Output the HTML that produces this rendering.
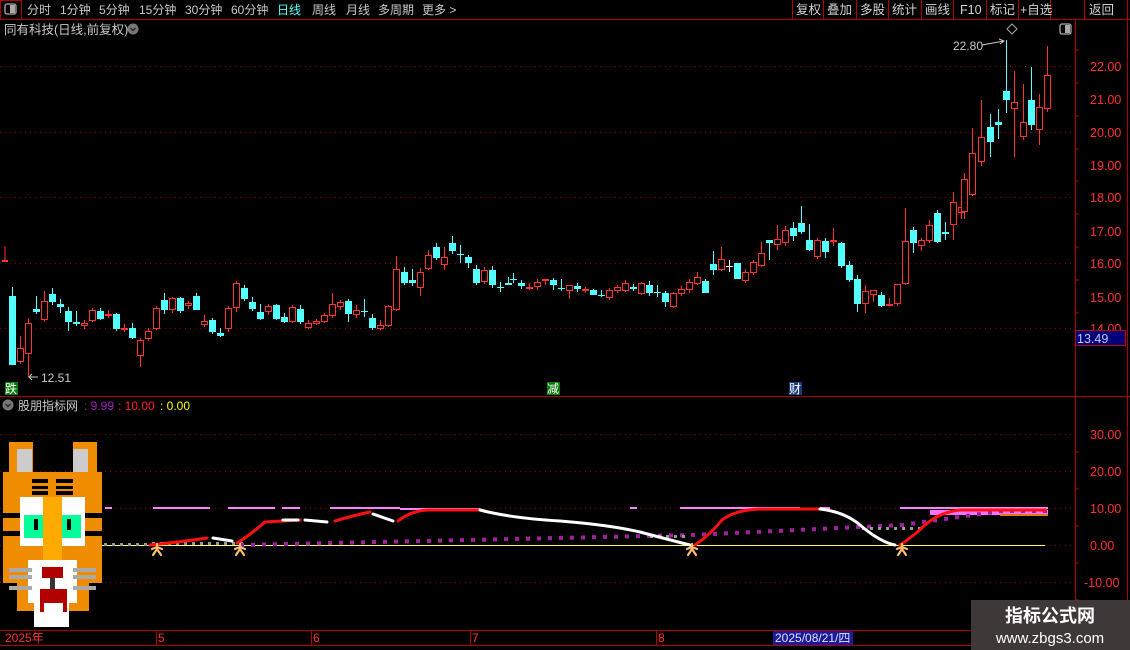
<!DOCTYPE html>
<html><head><meta charset="utf-8"><style>
body{margin:0;background:#000;width:1130px;height:650px;overflow:hidden;font-family:"Liberation Sans","Noto Sans CJK SC",sans-serif;}
#w{position:relative;width:1130px;height:650px;}
svg{position:absolute;left:0;top:0;}
</style></head><body><div id="w">
<svg id="s" width="1130" height="650" xmlns="http://www.w3.org/2000/svg" font-family="Liberation Sans, Noto Sans CJK SC, sans-serif">
<line x1="0" y1="19.5" x2="1130" y2="19.5" stroke="#b00000"/>
<rect x="0.5" y="0.5" width="21" height="19" fill="none" stroke="#b00000"/>
<rect x="5" y="4" width="11" height="10" rx="2" fill="none" stroke="#aaa" stroke-width="1.3"/><rect x="10" y="5" width="5" height="8" fill="#aaa"/>
<g font-size="12" fill="#c8c8c8">
<text x="27" y="14">分时</text><text x="60" y="14">1分钟</text><text x="99" y="14">5分钟</text><text x="139" y="14">15分钟</text><text x="185" y="14">30分钟</text><text x="231" y="14">60分钟</text>
<text x="277" y="14" fill="#54ffff">日线</text><text x="312" y="14">周线</text><text x="346" y="14">月线</text><text x="378" y="14">多周期</text><text x="422" y="14">更多 &gt;</text>
</g>
<g stroke="#b00000" fill="none"><path d="M792.5 0V19M823.5 0V19M856.5 0V19M888.5 0V19M921.5 0V19M953.5 0V19M986.5 0V19M1018.5 0V19M1050.5 0V19M1084.5 0V19M1127.5 0V650"/></g>
<g font-size="12.5" fill="#d0d0d0"><text x="796" y="14">复权</text><text x="827" y="14">叠加</text><text x="860" y="14">多股</text><text x="892" y="14">统计</text><text x="925" y="14">画线</text><text x="960" y="14">F10</text><text x="990" y="14">标记</text><text x="1020" y="14">+自选</text><text x="1089" y="14">返回</text></g>
<text x="4" y="34" font-size="12.5" fill="#c8c8c8">同有科技(日线,前复权)</text>
<circle cx="133" cy="29" r="5.5" fill="#777"/><path d="M130.5 28l2.5 2.5 2.5-2.5" stroke="#222" fill="none" stroke-width="1.3"/>
<path d="M1012 24l5 5-5 5-5-5z" fill="none" stroke="#aaa"/>
<rect x="1060" y="24" width="11" height="10" rx="2" fill="none" stroke="#aaa" stroke-width="1.3"/><rect x="1065" y="25" width="5" height="8" fill="#aaa"/>
<line x1="1075.5" y1="20" x2="1075.5" y2="630" stroke="#b00000"/>
<line x1="0" y1="396.5" x2="1130" y2="396.5" stroke="#b00000"/>
<line x1="0" y1="630.5" x2="1130" y2="630.5" stroke="#b00000"/>
<line x1="0" y1="645.5" x2="1130" y2="645.5" stroke="#b00000"/>
<g stroke="#8a0000" stroke-dasharray="1 4">
<path d="M0 66.5H1075M0 132.5H1075M0 197.5H1075M0 263.5H1075M0 328.5H1075"/>
<path d="M0 434.5H1075M0 471.5H1075M0 508.5H1075M0 545.5H1075M0 582.5H1075"/>
</g>
<g font-size="12.5" fill="#ff3030">
<text x="1090" y="71">22.00</text><text x="1090" y="104">21.00</text><text x="1090" y="137">20.00</text><text x="1090" y="170">19.00</text><text x="1090" y="202">18.00</text><text x="1090" y="236">17.00</text><text x="1090" y="268">16.00</text><text x="1090" y="302">15.00</text><text x="1090" y="333">14.00</text>
<text x="1090" y="439">30.00</text><text x="1090" y="476">20.00</text><text x="1090" y="513">10.00</text><text x="1090" y="550">0.00</text><text x="1084" y="587">-10.00</text>
</g>
<g stroke="#b00000"><path d="M1075 50H1079M1075 83H1079M1075 116H1079M1075 149H1079M1075 181H1079M1075 214H1079M1075 247H1079M1075 280H1079M1075 313H1079M1075 452H1079M1075 489H1079M1075 526H1079M1075 563H1079M1075 600H1079"/></g>
<rect x="1075.5" y="330.5" width="50" height="15" fill="#00007a" stroke="#c00000"/>
<text x="1077" y="343" font-size="12.5" fill="#c8c8ff">13.49</text>
<g id="c"></g>
<text x="953" y="50" font-size="12" fill="#c8c8c8">22.80</text><path d="M982 45L1004 41M999 39l5 2-4 3" stroke="#c8c8c8" fill="none"/>
<path d="M29 377H38M32 374l-3 3 3 3" stroke="#c8c8c8" fill="none"/><text x="41" y="382" font-size="12" fill="#c8c8c8">12.51</text>
<rect x="5" y="382" width="13" height="13" fill="#0a7a0a"/><text x="5" y="393" font-size="12" fill="#fff">跌</text>
<rect x="547" y="382" width="13" height="13" fill="#0a7a0a"/><text x="547" y="393" font-size="12" fill="#fff">减</text>
<rect x="789" y="382" width="13" height="13" fill="#1a3a7a"/><text x="789" y="393" font-size="12" fill="#fff">财</text>
<circle cx="8" cy="405" r="5.5" fill="#777"/><path d="M5.5 404l2.5 2.5 2.5-2.5" stroke="#222" fill="none" stroke-width="1.3"/>
<text x="18" y="410" font-size="12" fill="#c8c8c8">股朋指标网</text>
<text x="84" y="410" font-size="12" fill="#a020c0">: 9.99</text>
<text x="118" y="410" font-size="12" fill="#ff2020">: 10.00</text>
<text x="160" y="410" font-size="12" fill="#ffff00">: 0.00</text>
<line x1="102" y1="545.5" x2="1045" y2="545.5" stroke="#ffff60"/>
<g stroke="#ff80ff" stroke-width="2"><path d="M105 508H112M153 508H210M228 508H275M282 508H300M330 508H400M400 509H480M630 508H637M680 508H800M820 508H830M900 508H1048"/></g>
<path d="M930 510H1048V515H930Z" fill="#ff70ff"/>
<path d="M1000 515H1048" stroke="#e08000" stroke-width="2"/>
<g id="dots"></g>
<g fill="none" stroke-width="3" stroke-linecap="round">
<path d="M150 545Q180 542 207 538" stroke="#ff1010"/>
<path d="M213 538L232 541" stroke="#fff"/>
<path d="M237 543Q250 535 265 522L300 520" stroke="#ff1010"/>
<path d="M283 520H298M305 520L327 522" stroke="#fff"/>
<path d="M335 521Q355 515 370 512" stroke="#ff1010"/>
<path d="M373 514L393 521" stroke="#fff"/>
<path d="M398 521Q412 510 430 510H480" stroke="#ff1010"/>
<path d="M480 510Q510 518 560 521Q610 525 640 532Q670 540 690 545" stroke="#fff"/>
<path d="M695 545Q710 535 722 520Q735 510 760 509H820" stroke="#ff1010"/>
<path d="M820 509Q845 512 860 525Q880 542 895 545" stroke="#fff"/>
<path d="M900 545Q915 535 925 525Q940 512 960 510H1045" stroke="#ff1010"/>
</g>
<g id="stars" fill="none" stroke="#ffc070" stroke-width="2.2" stroke-linecap="round">
<path d="M157 544V549M152 549L157 547 162 549M157 549L153 555M157 549L161 555"/>
<path d="M240 544V549M235 549L240 547 245 549M240 549L236 555M240 549L244 555"/>
<path d="M692 544V549M687 549L692 547 697 549M692 549L688 555M692 549L696 555"/>
<path d="M902 544V549M897 549L902 547 907 549M902 549L898 555M902 549L906 555"/>
</g>
<g shape-rendering="crispEdges">
<rect x="9" y="442" width="24" height="32" fill="#f08c00"/><rect x="73" y="442" width="24" height="32" fill="#f08c00"/>
<rect x="17" y="449" width="15" height="23" fill="#cccccc"/><rect x="73" y="449" width="15" height="23" fill="#cccccc"/>
<rect x="3" y="472" width="99" height="111" fill="#f08c00"/>
<rect x="17" y="583" width="72" height="28" fill="#f08c00"/>
<rect x="32" y="479" width="41" height="4" fill="#000"/><rect x="32" y="486" width="41" height="3" fill="#000"/><rect x="32" y="491" width="41" height="4" fill="#000"/>
<rect x="48" y="479" width="8" height="16" fill="#f08c00"/>
<rect x="20" y="497" width="65" height="49" fill="#fff"/>
<rect x="3" y="513" width="17" height="5" fill="#000"/><rect x="3" y="531" width="17" height="5" fill="#000"/>
<rect x="85" y="513" width="17" height="5" fill="#000"/><rect x="85" y="531" width="17" height="5" fill="#000"/>
<rect x="24" y="515" width="19" height="23" fill="#00ff99"/><rect x="62" y="515" width="19" height="23" fill="#00ff99"/>
<rect x="34" y="519" width="4" height="11" fill="#000"/><rect x="67" y="519" width="4" height="11" fill="#000"/>
<rect x="43" y="497" width="19" height="70" fill="#ffaa00"/>
<rect x="28" y="560" width="49" height="43" fill="#fff"/><rect x="34" y="603" width="35" height="24" fill="#fff"/>
<rect x="9" y="568" width="23" height="4" fill="#aaa"/><rect x="9" y="575" width="23" height="4" fill="#aaa"/><rect x="9" y="586" width="23" height="4" fill="#aaa"/>
<rect x="73" y="568" width="23" height="4" fill="#aaa"/><rect x="73" y="575" width="23" height="4" fill="#aaa"/><rect x="73" y="586" width="23" height="4" fill="#aaa"/>
<rect x="42" y="567" width="21" height="11" fill="#b00000"/><rect x="50" y="578" width="5" height="11" fill="#333"/>
<rect x="40" y="589" width="27" height="23" fill="#b00000"/><rect x="44" y="603" width="19" height="9" fill="#fff"/>
</g>
<g font-size="12" fill="#ff3030"><text x="5" y="642">2025年</text><text x="158" y="642">5</text><text x="313" y="642">6</text><text x="472" y="642">7</text><text x="658" y="642">8</text></g>
<path d="M156.5 630V645M311.5 630V645M470.5 630V645M656.5 630V645" stroke="#b00000"/>
<rect x="773" y="631" width="80" height="14" fill="#1a1a9a"/><text x="775" y="642" font-size="12" fill="#e0e0ff">2025/08/21/四</text>
<rect x="971" y="600" width="159" height="50" fill="#3e3838"/>
<text x="1050" y="622" font-size="18" font-weight="bold" fill="#fff" text-anchor="middle">指标公式网</text>
<text x="1050" y="643" font-size="15" fill="#fff" text-anchor="middle">www.zbgs3.com</text>
</svg>
<script>
var D=[[12,296,365,0,287,365],[20,348,362,1,336,364],[28,323,354,1,318,377],[36,309,312,0,296,314],[44,301,320,1,291,322],[52,294,302,0,288,305],[60,304,307,0,299,313],[68,311,322,0,307,331],[76,322,324,0,311,326],[84,323,326,1,320,329],[92,310,321,1,308,322],[100,311,319,0,308,320],[108,314,316,1,310,318],[116,314,329,0,313,331],[124,328,330,1,324,332],[132,328,338,0,323,339],[140,340,356,1,338,367],[148,331,339,1,328,341],[156,308,329,1,306,330],[164,300,310,0,293,314],[172,298,310,1,297,313],[180,298,311,0,297,313],[188,303,306,1,301,309],[196,296,310,0,293,310],[204,321,325,1,315,327],[212,320,332,0,318,334],[220,333,336,0,328,337],[228,308,329,1,306,332],[236,283,308,1,281,312],[244,288,299,0,285,301],[252,302,309,0,297,311],[260,312,319,0,304,320],[268,306,312,1,304,315],[276,305,319,0,304,320],[284,317,322,0,313,323],[292,307,322,1,305,323],[300,309,322,0,305,324],[308,323,328,1,320,329],[316,321,324,1,319,325],[324,315,322,1,313,323],[332,304,316,1,293,318],[340,302,307,1,300,310],[348,301,314,0,299,322],[356,310,315,1,305,318],[364,311,312,2,299,317],[372,318,328,0,314,330],[380,325,329,1,320,330],[388,306,326,1,305,327],[396,269,310,1,256,311],[404,272,283,0,267,285],[412,280,283,0,269,286],[420,272,288,1,268,296],[428,255,269,1,250,270],[436,247,258,0,243,260],[444,257,265,1,247,270],[452,243,251,0,236,254],[460,254,254,2,245,263],[468,257,263,0,255,268],[476,269,283,0,265,285],[484,270,282,1,267,284],[492,270,285,0,266,288],[500,287,287,2,282,292],[508,283,285,0,277,285],
[513,279,279,2,273,283],[521,283,286,0,280,289],[529,287,289,1,283,290],[537,282,287,1,279,290],[545,279,280,1,279,285],[553,280,285,0,278,290],[561,288,288,2,279,291],[569,285,291,1,285,299],[577,286,289,0,283,292],[585,289,291,1,287,293],[593,290,295,0,289,295],[601,295,295,2,290,297],[609,290,298,1,288,300],[617,287,291,1,285,293],[625,283,291,1,280,292],[633,287,289,0,284,291],[641,283,294,1,282,295],[649,285,293,0,281,296],[657,292,292,2,285,297],[665,293,302,0,291,307],[673,293,307,1,292,308],[681,289,294,1,286,296],[689,282,290,1,279,293],[697,277,284,1,272,285],[705,281,293,0,279,293],[713,264,270,0,251,275],[721,259,270,1,247,271],[729,266,266,3,260,272],[737,263,279,0,263,279],[745,272,281,1,269,283],[753,262,273,1,260,275],[761,253,266,1,242,267],[769,240,243,0,240,260],[777,239,245,1,225,250],[785,230,243,1,226,246],[793,228,236,0,222,241],[801,223,232,0,206,234],[809,240,250,0,224,251],[817,240,257,1,238,259],[825,241,252,0,238,258],[833,240,242,1,228,246],[841,243,266,0,242,268],[849,265,280,0,261,282],[857,279,304,0,275,312],[865,291,304,1,285,313],[873,290,295,1,290,302],[881,295,306,0,292,307],[889,304,306,1,298,306],[897,284,304,1,284,306],[905,241,284,1,208,285],[913,230,243,0,227,253],[921,240,246,1,238,251],[929,225,241,1,220,243],[937,213,242,0,210,243],[945,232,233,0,222,240],[953,202,225,1,192,240],[961,207,213,1,199,219],
[964,179,212,1,173,219],[972,153,195,1,128,196],[981,137,162,1,100,166],[990,127,142,0,114,157],[998,122,125,0,109,139],[1006,91,100,0,40,113],[1014,102,109,1,71,157],[1023,122,137,1,84,140],[1031,100,125,0,67,130],[1039,107,130,1,94,145],[1047,75,109,1,46,112]];
var s='<path d="M5 246V262" stroke="#ff3232"/><rect x="2" y="260" width="6" height="2" fill="#ff3232"/>';
D.forEach(function(d){var x=d[0],a=d[1],b=d[2],c=d[3],h=d[4],l=d[5];var col=(c==1)?'#ff3232':'#54ffff';if(c==3)col='#fff';
s+='<path d="M'+(x+.5)+' '+h+'V'+l+'" stroke="'+col+'"/>';
if(c==1){s+='<rect x="'+(x-2.5)+'" y="'+(a+.5)+'" width="6" height="'+Math.max(1,b-a-1)+'" fill="#000" stroke="'+col+'"/>';}
else if(c==0){s+='<rect x="'+(x-3)+'" y="'+a+'" width="7" height="'+Math.max(2,b-a)+'" fill="'+col+'"/>';}
else{s+='<path d="M'+(x-3)+' '+(a+.5)+'H'+(x+4)+'" stroke="'+col+'"/>';}});
document.getElementById('c').innerHTML=s;
var t='';
for(var x=104;x<245;x+=8)t+='<rect x="'+x+'" y="'+(543-(x>150?1:0))+'" width="3" height="3" fill="#999"/>';
for(var x=240;x<1045;x+=11){var y=x<690?545-(x-240)/450*10:(x<900?535-(x-690)/210*10:Math.max(511,525-(x-900)/100*14));t+='<rect x="'+x+'" y="'+(y-2)+'" width="4" height="4" fill="#a020a0"/>';}
for(var x=650;x<690;x+=8)t+='<rect x="'+x+'" y="535" width="3" height="3" fill="#999"/>';
for(var x=862;x<925;x+=8)t+='<rect x="'+x+'" y="527" width="3" height="3" fill="#999"/>';
document.getElementById('dots').innerHTML=t;
</script>
</div></body></html>
